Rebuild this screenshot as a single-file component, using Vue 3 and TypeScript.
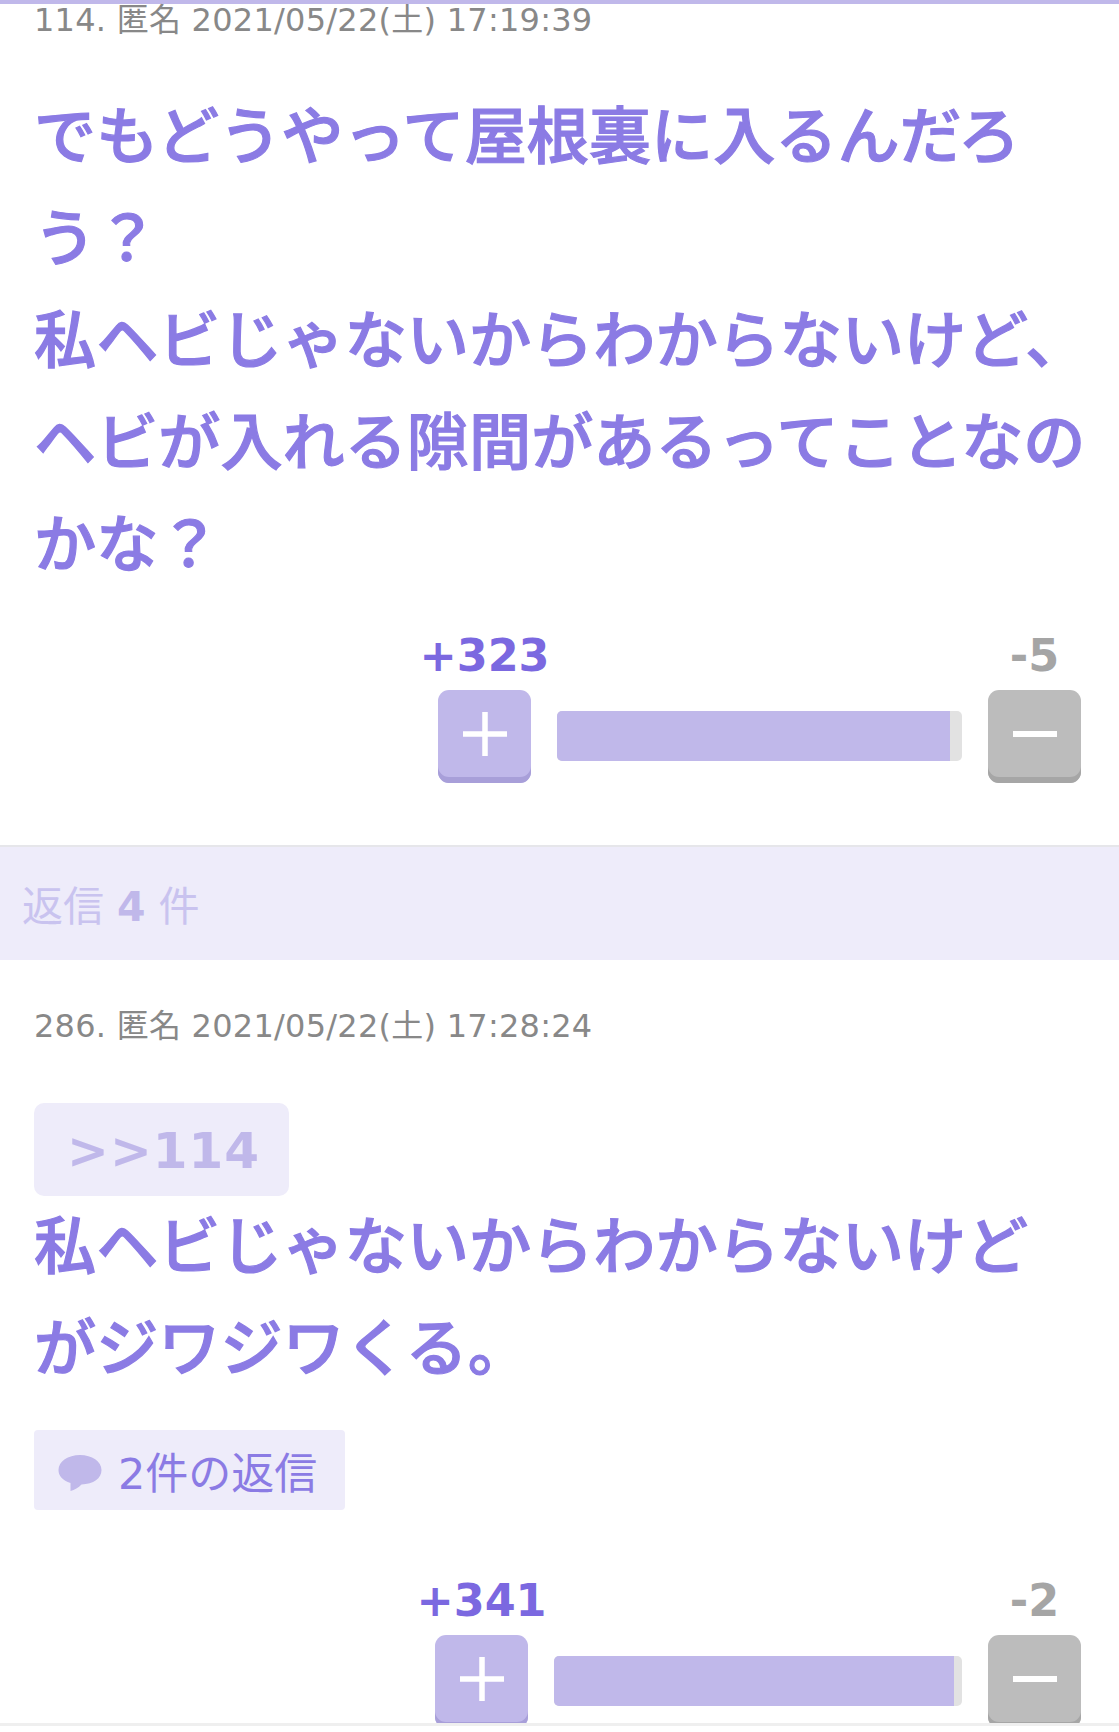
<script setup lang="ts">
interface Post {
  no: number
  date: string
  quote?: string
  lines: string[]
  replies?: number
  plus: number
  minus: number
  barWidth: number
  fill: number
}

const first: Post = {
  no: 114,
  date: '2021/05/22(土) 17:19:39',
  lines: ['でもどうやって屋根裏に入るんだろう？', '私ヘビじゃないからわからないけど、ヘビが入れる隙間があるってことなのかな？'],
  plus: 323,
  minus: 5,
  barWidth: 405,
  fill: 97
}

const reply: Post = {
  no: 286,
  date: '2021/05/22(土) 17:28:24',
  quote: '>>114',
  lines: ['私ヘビじゃないからわからないけど', 'がジワジワくる。'],
  replies: 2,
  plus: 341,
  minus: 2,
  barWidth: 408,
  fill: 98
}

const posts = [first, reply]
</script>

<template>
  <div class="page">
    <div class="top-bar"></div>
    <template v-for="(post, i) in posts" :key="post.no">
      <section class="post" :class="{ last: i === posts.length - 1 }">
        <div class="meta">{{ post.no }}. 匿名 {{ post.date }}</div>
        <div v-if="post.quote" class="quote">{{ post.quote }}</div>
        <div class="body" :class="{ 'no-quote': !post.quote }">
          <p v-for="line in post.lines" :key="line">{{ line }}</p>
        </div>
        <div v-if="post.replies" class="reply-chip">
          <svg class="bubble" viewBox="0 0 44 38" width="44" height="38">
            <path d="M22 1C10 1 0.500 7.500 0.500 16c0 6 4 10.500 12 13l0 8c4-1 8-3.500 11-6.500 12-.5 20-6 20-14.500S34 1 22 1z" fill="#c0b8ea" />
          </svg>
          <span>{{ post.replies }}件の返信</span>
        </div>
        <div class="vote">
          <div class="count plus-count">+{{ post.plus }}</div>
          <div></div>
          <div class="count minus-count">-{{ post.minus }}</div>
          <button class="btn plus-btn">
            <svg viewBox="0 0 44 44" width="44" height="44"><path d="M0 22h44M22 0v44" stroke="#fff" stroke-width="5.5" /></svg>
          </button>
          <div class="bar" :style="{ width: post.barWidth + 'px' }">
            <div class="fill" :style="{ width: post.fill + '%' }"></div>
          </div>
          <button class="btn minus-btn">
            <svg viewBox="0 0 44 44" width="44" height="44"><path d="M0 22h44" stroke="#fff" stroke-width="6" /></svg>
          </button>
        </div>
      </section>
      <div v-if="i === 0" class="band">返信 <b>4</b> 件</div>
    </template>
  </div>
</template>

<style>
html,
body {
  margin: 0;
  background: #fff;
}
</style>

<style scoped>
.page {
  width: 1119px;
  height: 1732px;
  overflow: hidden;
  background: #fff;
  font-family: "DejaVu Sans", "Noto Sans CJK JP", sans-serif;
}

.top-bar {
  height: 4px;
  background: #c0b8ea;
}

.post {
  padding: 0 38px 62px 34px;
}

.post.last {
  position: relative;
  height: 766px;
  box-sizing: border-box;
  padding-top: 50px;
  padding-bottom: 0;
  overflow: hidden;
}

.post.last::after {
  content: "";
  position: absolute;
  left: 0;
  right: 0;
  bottom: 0;
  height: 3px;
  background: #efefef;
}

.meta {
  font-size: 32px;
  line-height: 32px;
  letter-spacing: 0.25px;
  color: #888;
  white-space: nowrap;
}

.quote {
  margin-top: 61px;
  width: 255px;
  height: 93px;
  box-sizing: border-box;
  padding-left: 33px;
  border-radius: 10px;
  background: #eeecfa;
  color: #c0b8ea;
  font-size: 50px;
  font-weight: 700;
  line-height: 96px;
  letter-spacing: 1px;
}

.quote + .body {
  margin-top: -5px;
}

.body {
  width: 1056px;
  font-family: "Noto Sans CJK JP", sans-serif;
  font-size: 62.15px;
  font-weight: 500;
  line-height: 102px;
  color: #8b7be4;
  -webkit-text-stroke: 1.2px #8b7be4;
}

.body.no-quote {
  margin-top: 45px;
}

.body p {
  margin: 0;
}

.reply-chip {
  display: flex;
  align-items: center;
  gap: 16px;
  width: 311px;
  height: 80px;
  box-sizing: border-box;
  margin-top: 35px;
  padding-left: 24px;
  border-radius: 4px;
  background: #eeecfa;
  color: #8b7be4;
  font-size: 43px;
}

.bubble {
  flex: none;
  margin-top: 6px;
}

.vote {
  display: grid;
  grid-template-columns: 93px auto 93px;
  justify-content: end;
  column-gap: 26px;
  margin-top: 44px;
}

.reply-chip + .vote {
  margin-top: 70px;
}

.count {
  display: flex;
  justify-content: center;
  margin-bottom: 13px;
  font-size: 44.5px;
  font-weight: 700;
  line-height: 42px;
  white-space: nowrap;
}

.plus-count {
  color: #7b68e0;
}

.minus-count {
  color: #a5a5a5;
}

.btn {
  display: flex;
  align-items: center;
  justify-content: center;
  width: 93px;
  height: 93px;
  padding: 0 0 6px;
  border: 0;
  border-radius: 11px;
}

.plus-btn {
  background: #c0b8ea;
  box-shadow: inset 0 -6px 0 #a89fd9;
}

.minus-btn {
  background: #bcbcbc;
  box-shadow: inset 0 -6px 0 #a6a6a6;
}

.bar {
  height: 50px;
  margin-top: 21px;
  overflow: hidden;
  border-radius: 5px;
  background: #e2e2e2;
}

.fill {
  height: 100%;
  background: #c0b8ea;
}

.band {
  height: 113px;
  padding-left: 22px;
  border-top: 2px solid #e6e6ea;
  background: #eeecfa;
  color: #c9c3ef;
  font-size: 41px;
  line-height: 120px;
}

.band b {
  color: #c0b8ea;
}
</style>
